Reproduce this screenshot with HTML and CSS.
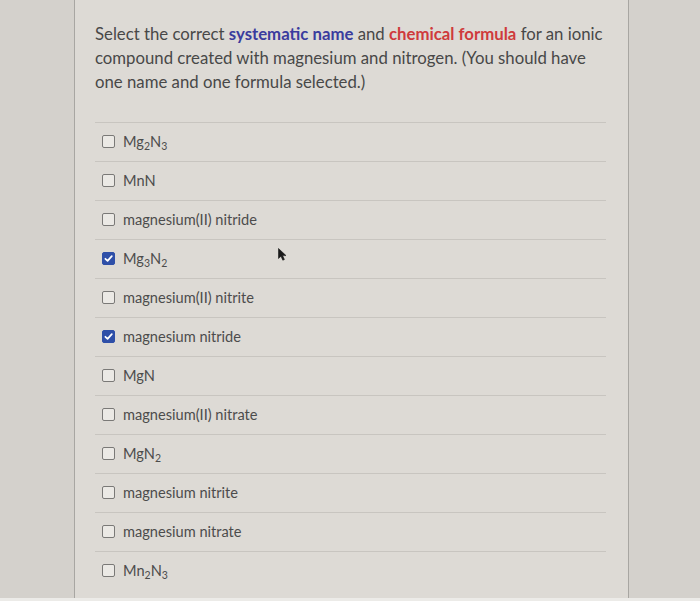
FILE: index.html
```html
<!DOCTYPE html>
<html>
<head>
<meta charset="utf-8">
<link rel="stylesheet" href="styles.css">
</head>
<body>
<div class="page">
  <div class="card">
    <p class="question">Select the correct <span class="blue">systematic name</span> and <span class="red">chemical formula</span> for an ionic compound created with magnesium and nitrogen. (You should have one name and one formula selected.)</p>
    <ul class="options">
      <li class="opt"><span class="box"></span><span class="label">Mg<sub>2</sub>N<sub>3</sub></span></li>
      <li class="opt"><span class="box"></span><span class="label">MnN</span></li>
      <li class="opt"><span class="box"></span><span class="label">magnesium(II) nitride</span></li>
      <li class="opt"><span class="box checked"><svg viewBox="0 0 12 12" width="12" height="12"><path d="M2.6 6.3 L5 8.6 L9.6 3.4" fill="none" stroke="#fff" stroke-width="1.9" stroke-linecap="round" stroke-linejoin="round"/></svg></span><span class="label">Mg<sub>3</sub>N<sub>2</sub></span>
        <svg class="cursor" viewBox="0 0 9 13" width="9" height="13"><path d="M0.5 0.5 L0.5 10.5 L3 8.2 L4.8 12.2 L6.4 11.5 L4.6 7.6 L8 7.6 Z" fill="#1a1a1a" stroke="#1a1a1a" stroke-width="0.6" stroke-linejoin="round"/></svg>
      </li>
      <li class="opt"><span class="box"></span><span class="label">magnesium(II) nitrite</span></li>
      <li class="opt"><span class="box checked"><svg viewBox="0 0 12 12" width="12" height="12"><path d="M2.6 6.3 L5 8.6 L9.6 3.4" fill="none" stroke="#fff" stroke-width="1.9" stroke-linecap="round" stroke-linejoin="round"/></svg></span><span class="label">magnesium nitride</span></li>
      <li class="opt"><span class="box"></span><span class="label">MgN</span></li>
      <li class="opt"><span class="box"></span><span class="label">magnesium(II) nitrate</span></li>
      <li class="opt"><span class="box"></span><span class="label">MgN<sub>2</sub></span></li>
      <li class="opt"><span class="box"></span><span class="label">magnesium nitrite</span></li>
      <li class="opt"><span class="box"></span><span class="label">magnesium nitrate</span></li>
      <li class="opt"><span class="box"></span><span class="label">Mn<sub>2</sub>N<sub>3</sub></span></li>
    </ul>
  </div>
</div>
<div class="strip"></div>
</body>
</html>
```

FILE: styles.css
```css
html, body {
  margin: 0;
  padding: 0;
}
body {
  background: #d4d1cc;
  font-family: Lato, "Open Sans", sans-serif;
  color: #4a4a4a;
  overflow: hidden;
}
.page {
  height: 598px;
  padding-left: 74px;
  overflow: hidden;
}
.card {
  width: 555px;
  height: 598px;
  background: #dddad5;
  border-left: 1px solid #a8a6a2;
  border-right: 1px solid #a8a6a2;
  padding: 22px 22px 0 20px;
  box-sizing: border-box;
}
.question {
  margin: 0 0 28px 0;
  font-size: 16.75px;
  line-height: 24px;
  color: #484848;
}
.blue {
  color: #3a3c9e;
  font-weight: 700;
}
.red {
  color: #cf3a3c;
  font-weight: 700;
}
.options {
  list-style: none;
  margin: 0;
  padding: 0;
}
.opt {
  position: relative;
  height: 39px;
  box-sizing: border-box;
  border-top: 1px solid #c8c5c0;
  display: flex;
  align-items: center;
  padding-left: 7px;
  padding-bottom: 1px;
}
.box {
  width: 13px;
  height: 13px;
  box-sizing: border-box;
  border: 1.5px solid #7a7977;
  border-radius: 2px;
  background: #ebe9e5;
  margin-right: 8px;
  flex: none;
  display: flex;
}
.box.checked {
  background: #2e4fa8;
  border-color: #2e4fa8;
  align-items: center;
  justify-content: center;
}
.box.checked svg {
  width: 11px;
  height: 11px;
}
.label {
  font-size: 14.6px;
  color: #4c4c4c;
}
sub {
  font-size: 0.72em;
  vertical-align: -0.25em;
  line-height: 0;
}
.cursor {
  position: absolute;
  left: 183px;
  top: 8px;
}
.strip {
  height: 3px;
  background: #ecebe8;
}
```
